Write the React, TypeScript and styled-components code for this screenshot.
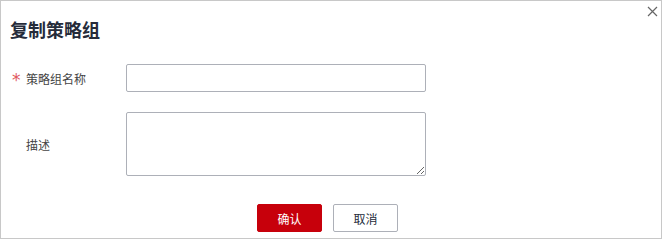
import styled, { createGlobalStyle } from "styled-components";

const GlobalStyle = createGlobalStyle`
  html, body {
    margin: 0;
    padding: 0;
    background: #fff;
  }
  body {
    font-family: "Liberation Sans", "Noto Sans CJK SC", sans-serif;
  }
`;

const App = () => {
  return (
    <>
      <GlobalStyle />
      <Dialog>
        <CloseButton aria-label="关闭">
          <svg width="11" height="11" viewBox="0 0 11 11">
            <path d="M1 1 L10 10 M10 1 L1 10" stroke="#666" strokeWidth="1.2" fill="none" />
          </svg>
        </CloseButton>
        <Title>复制策略组</Title>

        <Form>
          <Row>
            <Label>
              <Star>*</Star>策略组名称
            </Label>
            <Input type="text" />
          </Row>
          <Row>
            <Label>描述</Label>
            <TextArea />
          </Row>
        </Form>

        <Footer>
          <Button $primary>确认</Button>
          <Button>取消</Button>
        </Footer>
      </Dialog>
    </>
  );
};

const Dialog = styled.div`
  position: relative;
  box-sizing: border-box;
  width: 662px;
  height: 239px;
  border: 1px solid #c8c8c8;
  background: #fff;
  padding: 16px 0 0 9px;
`;

const CloseButton = styled.button`
  position: absolute;
  top: 3px;
  right: 1px;
  width: 15px;
  height: 15px;
  padding: 0;
  border: none;
  background: transparent;
  display: flex;
  align-items: center;
  justify-content: center;
  cursor: pointer;
`;

const Title = styled.h2`
  margin: 0;
  font-size: 18px;
  line-height: 24px;
  font-weight: bold;
  color: #252b3a;
  font-family: "Noto Sans CJK SC", sans-serif;
`;

const Form = styled.div`
  display: flex;
  flex-direction: column;
  gap: 20px;
  margin-top: 23px;
`;

const Row = styled.div`
  display: flex;
  align-items: center;
`;

const Label = styled.label`
  width: 116px;
  padding-left: 16px;
  box-sizing: border-box;
  font-size: 12px;
  color: #444;
  font-family: "Noto Sans CJK SC", sans-serif;
  position: relative;
`;

const Star = styled.span`
  position: absolute;
  left: 2px;
  top: 0px;
  color: #e0585e;
  font-size: 17px;
  line-height: 20px;
  font-family: "DejaVu Sans", sans-serif;
`;

const Input = styled.input`
  box-sizing: border-box;
  width: 300px;
  height: 28px;
  border: 1px solid #adb0b8;
  border-radius: 2px;
  outline: none;
  padding: 0 8px;
  font-size: 12px;
`;

const TextArea = styled.textarea`
  box-sizing: border-box;
  width: 300px;
  height: 64px;
  border: 1px solid #adb0b8;
  border-radius: 2px;
  outline: none;
  padding: 4px 8px;
  font-size: 12px;
  resize: both;
  display: block;
`;

const Footer = styled.div`
  display: flex;
  justify-content: center;
  gap: 11px;
  margin-top: 28px;
  padding-right: 16px;
`;

const Button = styled.button<{ $primary?: boolean }>`
  box-sizing: border-box;
  width: 65px;
  height: 28px;
  border-radius: 2px;
  font-size: 12px;
  font-family: "Noto Sans CJK SC", sans-serif;
  cursor: pointer;
  border: 1px solid ${(p) => (p.$primary ? "#c7000b" : "#adb0b8")};
  background: ${(p) => (p.$primary ? "#c7000b" : "#fff")};
  color: ${(p) => (p.$primary ? "#fff" : "#252b3a")};
`;

export default App;
